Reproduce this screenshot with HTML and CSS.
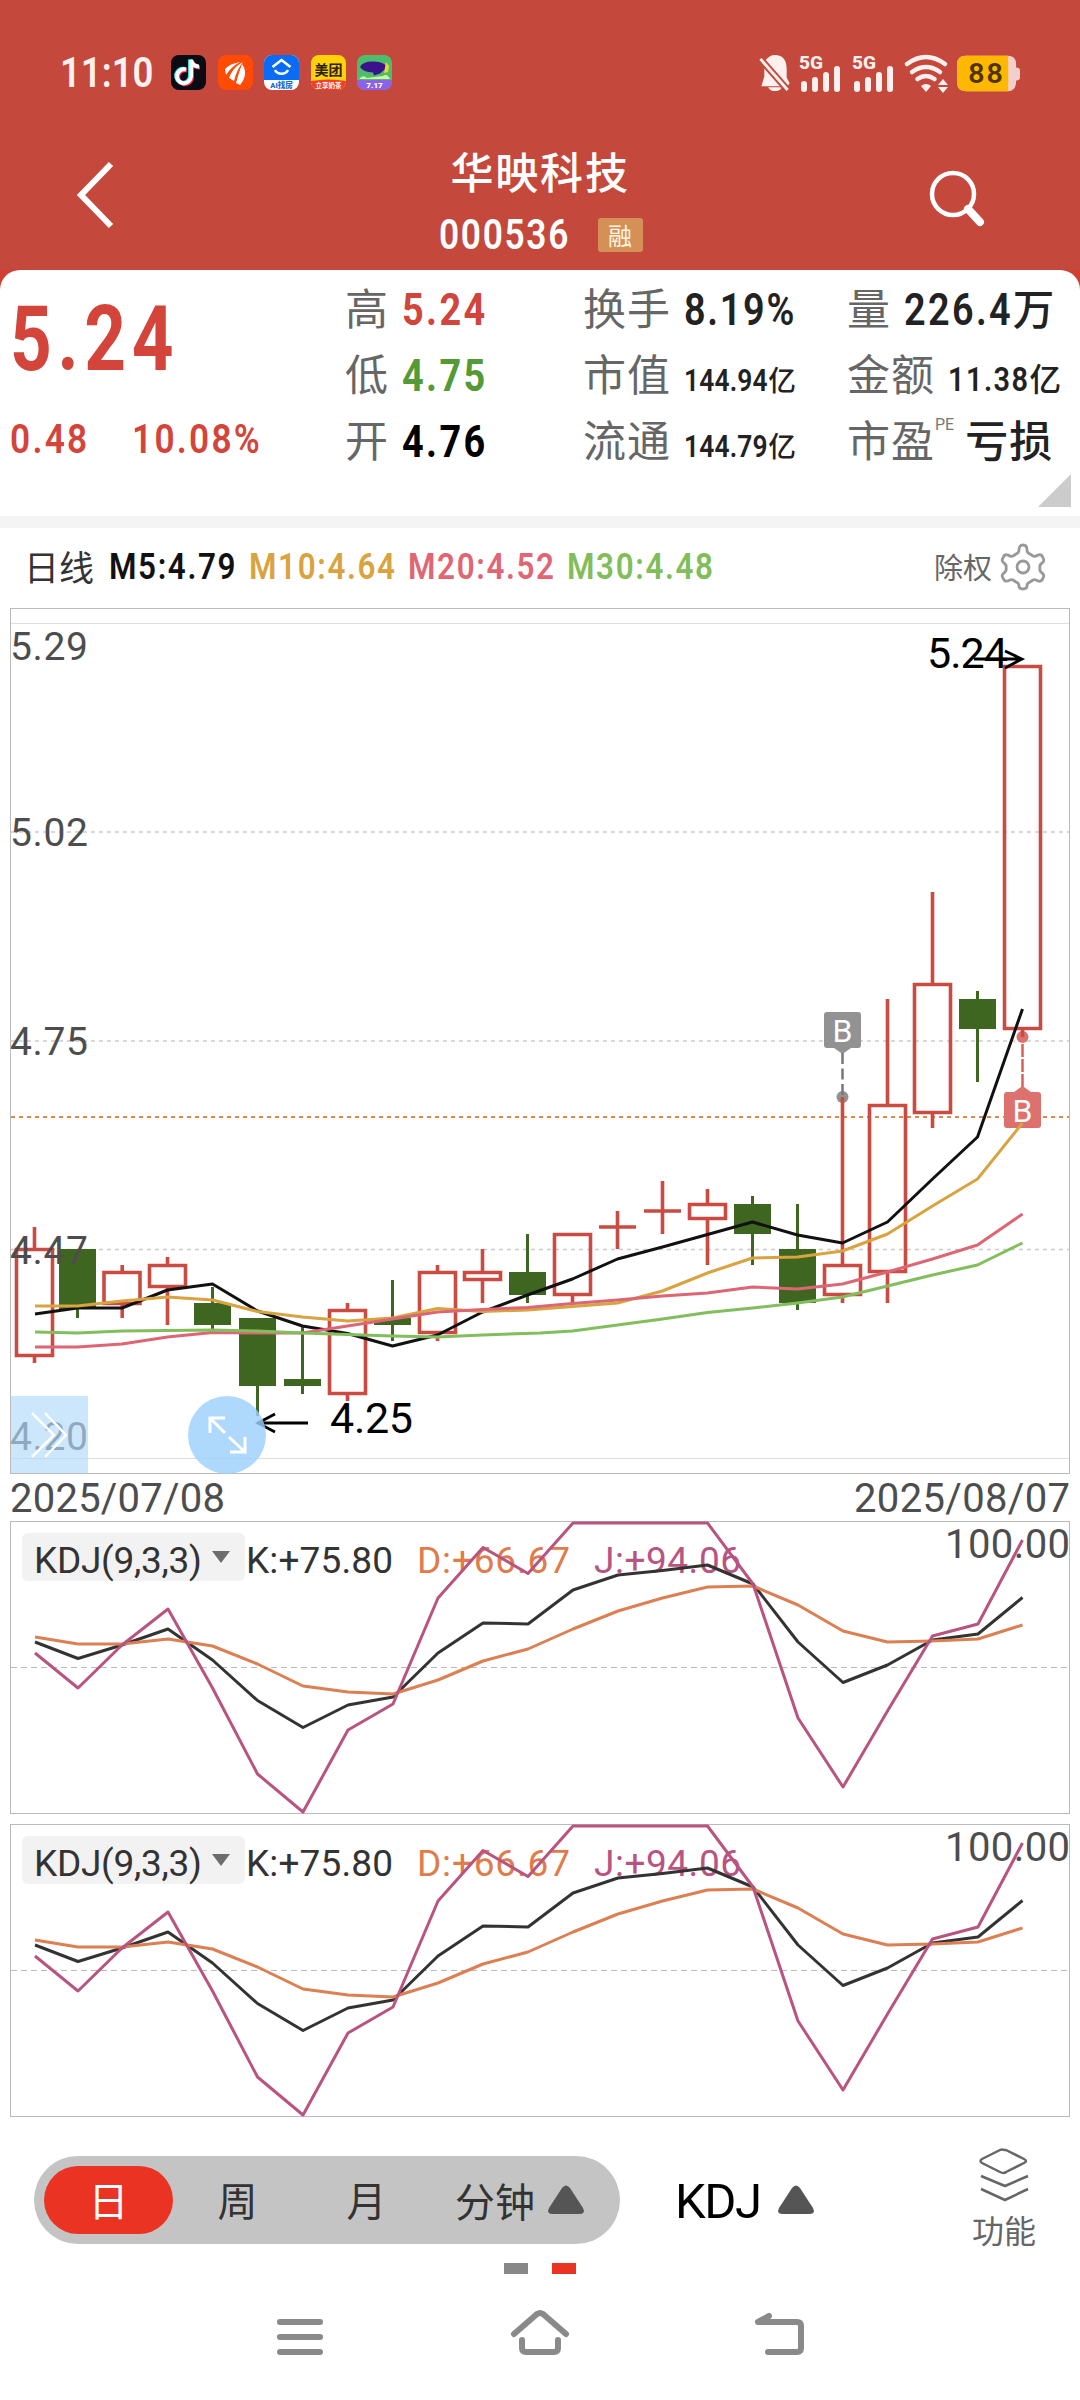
FILE: index.html
```html
<!DOCTYPE html>
<html lang="zh-CN">
<head>
<meta charset="utf-8">
<title>华映科技 000536</title>
<link rel="stylesheet" href="styles.css">
</head>
<body>
<header class="top">
  <div class="status">
    <span class="clock">11:10</span>
    <div class="apps">
      <svg viewBox="0 0 35 35"><rect width="35" height="35" rx="8" fill="#0b0b14"/><g fill="none" stroke-width="4"><path d="M15 14.500a7 7 0 1 0 5 7V5c1 4 4 6.500 8 6.500" stroke="#25e8e2" transform="translate(-1 -.5)"/><path d="M15 14.500a7 7 0 1 0 5 7V5c1 4 4 6.500 8 6.500" stroke="#fe2c55" transform="translate(1 1)"/><path d="M15 14.500a7 7 0 1 0 5 7V5c1 4 4 6.500 8 6.500" stroke="#fff"/></g></svg>
      <svg viewBox="0 0 35 35"><rect width="35" height="35" rx="8" fill="#ff4b05"/><path d="M7 14q4-5 15-7Q13 12 8 20ZM11 23Q15 12 25 7Q19 14 16 26ZM18 28Q21 17 24 9Q31 19 22 30Z" fill="#fff"/></svg>
      <svg viewBox="0 0 35 35"><rect width="35" height="35" rx="8" fill="#fff"/><path d="M8 0h19a8 8 0 0 1 8 8v17H0V8a8 8 0 0 1 8-8z" fill="#0a6cf5"/><path d="M8.500 12l9-7 9 7M11 15a7 6 0 0 0 13 0" fill="none" stroke="#fff" stroke-width="2.500"/><text x="17.500" y="33" font-size="7.500" font-weight="900" text-anchor="middle" fill="#1769d2">AI找房</text></svg>
      <svg viewBox="0 0 35 35"><rect width="35" height="35" rx="8" fill="#ffd20a"/><path d="M0 26q18-3 35 0v1a8 8 0 0 1-8 8H8a8 8 0 0 1-8-8z" fill="#f0402c"/><text x="17.500" y="19.500" font-size="14" font-weight="700" text-anchor="middle" fill="#2b2200">美团</text><text x="17.500" y="33" font-size="6.500" font-weight="700" text-anchor="middle" fill="#fff">立享奶茶</text></svg>
      <svg viewBox="0 0 35 35"><rect width="35" height="35" rx="8" fill="#4dbd6b"/><path d="M0 25h35v2a8 8 0 0 1-8 8H8a8 8 0 0 1-8-8z" fill="#8a63e8"/><path d="M3 12q3-6 14-5.500t13 6l-7 6-6 2-1-3Q6 17 3 12z" fill="#3c128c"/><path d="M29 7l3 4-1 6-4 1z" fill="#ecd52f"/><path d="M2 24q4-5 8-1l8-1 8-1q4-3 7 3z" fill="#d7efab"/><text x="17.500" y="33" font-size="8" font-weight="900" text-anchor="middle" fill="#fff">7.17</text></svg>
    </div>
    <div class="signals">
      <svg class="bell" viewBox="0 0 32 38" fill="#fdf0ee"><path d="M6 6Q10 0 16 0q12 0 12 15v8l3 6-2 3H2l3-10V14z"/><path d="M9 33h14q-2 4-7 4t-7-4z"/><path d="M1 4l28 32" stroke="#c4483c" stroke-width="7"/><path d="M1 4l28 32" stroke="#fdf0ee" stroke-width="3"/></svg>
      <svg class="cell" viewBox="0 0 46 38" fill="#fdf0ee"><text x="1" y="14" font-size="18" font-weight="800" textLength="24" lengthAdjust="spacingAndGlyphs">5G</text><rect x="3" y="26" width="6" height="11" rx="3"/><rect x="14" y="22" width="6" height="15" rx="3"/><rect x="25" y="17" width="6" height="20" rx="3"/><rect x="36" y="11" width="6" height="26" rx="3"/></svg>
      <svg class="cell" viewBox="0 0 46 38" fill="#fdf0ee"><text x="1" y="14" font-size="18" font-weight="800" textLength="24" lengthAdjust="spacingAndGlyphs">5G</text><rect x="3" y="26" width="6" height="11" rx="3"/><rect x="14" y="22" width="6" height="15" rx="3"/><rect x="25" y="17" width="6" height="20" rx="3"/><rect x="36" y="11" width="6" height="26" rx="3"/></svg>
      <svg class="wifi" viewBox="0 0 46 38"><g fill="none" stroke="#fdf0ee" stroke-width="4.500" stroke-linecap="round"><path d="M3 9q19-14 38 0M8 17q14-10 28 0M13.500 24q8.500-6 17 0"/></g><path d="M17 31q5-4 10 0l-5 6zM34 30l5-6 5 6zM34 32l5 6 5-6z" fill="#fdf0ee"/></svg>
      <svg class="battery" viewBox="0 0 64 36"><path d="M9 0h43q7 0 8 7v5q4 0 4 3v7q0 3-4 3v3q-1 8-8 8H9q-9 0-9-9V9q0-9 9-9z" fill="#f2cfcb"/><path d="M9 0h43v36H9q-9 0-9-9V9q0-9 9-9z" fill="#ffb800"/><text x="29" y="28" font-size="29" font-weight="600" text-anchor="middle" textLength="35" fill="#4f3300">88</text></svg>
    </div>
  </div>
  <div class="titlebar">
    <svg class="back" viewBox="0 0 44 72" fill="none" stroke="#fff" stroke-width="6"><path d="M38 5L8 36l30 31"/></svg>
    <div class="name">
      <h1>华映科技</h1>
      <div class="codeline"><span class="code">000536</span><span class="badge">融</span></div>
    </div>
    <svg class="search" viewBox="0 0 60 60" fill="none" stroke="#fff"><circle cx="25" cy="25" r="21" stroke-width="4.500"/><path d="M40 40l12 13" stroke-width="8" stroke-linecap="round"/></svg>
  </div>
</header>

<section class="cardwrap">
  <div class="quote">
    <div class="price">
      <div class="last">5.24</div>
      <div class="change"><span class="diff">0.48</span><span class="pct">10.08%</span></div>
    </div>
    <div class="col c1">
      <div class="item"><label>高</label><b class="num red">5.24</b></div>
      <div class="item"><label>低</label><b class="num green">4.75</b></div>
      <div class="item"><label>开</label><b class="num black">4.76</b></div>
    </div>
    <div class="col c2">
      <div class="item"><label>换手</label><b class="num turn">8.19%</b></div>
      <div class="item"><label>市值</label><b class="num small">144.94<i>亿</i></b></div>
      <div class="item"><label>流通</label><b class="num small">144.79<i>亿</i></b></div>
    </div>
    <div class="col c3">
      <div class="item"><label>量</label><b class="num vol">226.4<i>万</i></b></div>
      <div class="item"><label>金额</label><b class="num amt">11.38<i>亿</i></b></div>
      <div class="item"><label>市盈</label><sup>PE</sup><b class="cjk">亏损</b></div>
    </div>
    <span class="corner"></span>
  </div>
</section>

<section class="legend">
  <span class="period">日线</span>
  <span class="ma ma5">M5:4.79</span>
  <span class="ma ma10">M10:4.64</span>
  <span class="ma ma20">M20:4.52</span>
  <span class="ma ma30">M30:4.48</span>
  <span class="adjust">除权</span>
  <svg class="gear" viewBox="0 0 46 46" fill="none" stroke="#999" stroke-width="2.800" stroke-linejoin="round"><path d="M19 7q0-5 4-5t4 5q0 3 3 4l3 2q2 1 5-1 4-1 5 3 2 3-1 5-3 2-2 5-1 3 2 5 3 2 1 5-1 4-5 3-3-2-5-1l-3 2q-3 1-3 4 0 3-4 3t-4-3q0-3-3-4l-3-2q-2-1-5 1-4 1-5-3-2-3 1-5 3-2 2-5 1-3-2-5-3-2-1-5 1-4 5-3 3 2 5 1l3-2q3-1 3-4z"/><circle cx="23" cy="24" r="6"/></svg>
</section>

<svg class="chart" viewBox="0 595 1080 920">
  <g fill="none" stroke-width="1">
    <rect x="10.500" y="608.500" width="1059" height="865" stroke="#bbb"/>
    <path d="M11 623.500H1069M11 1458.500H1069" stroke="#ddd"/>
    <path d="M11 832H1069M11 1041H1069M11 1249.500H1069" stroke="#ccc" stroke-width="1.500" stroke-dasharray="4 4"/>
  </g>
  <path d="M11 1117H1069" stroke="#dc8a4c" stroke-width="2" stroke-dasharray="4 4"/>
  <g class="axis">
    <text x="10" y="660" textLength="78">5.29</text>
    <text x="10" y="846" textLength="78">5.02</text>
    <text x="10" y="1055" textLength="78">4.75</text>
    <text x="10" y="1450" textLength="78">4.20</text>
  </g>
  <g fill="#929292"><rect x="824" y="1012" width="37" height="36" rx="3"/><path d="M834 1048h17l-8.500 6z"/><circle cx="842.500" cy="1097" r="6"/><path d="M842.500 1053V1095" stroke="#777" stroke-width="2.500" stroke-dasharray="11 4.500"/></g>
  <g fill="#dc716d"><rect x="1004" y="1092" width="37" height="36" rx="3"/><path d="M1014 1092h17l-8.500-6z"/><circle cx="1022.500" cy="1037" r="6"/><path d="M1022.500 1044V1088" stroke="#d9605a" stroke-width="2.500" stroke-dasharray="13 2"/></g>
  <text class="mark" x="842.500" y="1042">B</text><text class="mark" x="1022.500" y="1122">B</text>
  <path class="up" d="M16.500 1249.500h36v106h-36zM34.500 1227v22M34.500 1355v8M104 1272.500h36v31h-36zM122.200 1265v7M122.200 1303v15M149.500 1265.500h36v21h-36zM167.500 1257v8M167.500 1287v38M329.500 1310.500h36v83h-36zM347.500 1303v7M347.500 1394v7M419.500 1272.500h36v60h-36zM437.500 1265v7M437.500 1333v8M464.500 1272.500h36v7h-36zM482.500 1249v23M482.500 1280v23M554.500 1234.500h36v60h-36zM572.500 1295v8M599 1227h37M617.500 1211v38M644 1211h37M662.500 1181v53M689.500 1204.500h36v14h-36zM707.500 1189v15M707.500 1219v46M824.500 1265.500h36v29h-36zM842.500 1097v168M842.500 1295v8M869.500 1105.500h36v166h-36zM887.500 999v106M887.500 1272v31M914.500 984.500h36v128h-36zM932.500 892v92M932.500 1113v15M1004.500 666.500h36v362h-36zM1022.500 1029v8"/>
  <g fill="#3e6621">
    <path d="M59 1249h37v60H59zM194 1303h37v22h-37zM239 1318h37v68h-37zM284 1379h37v7h-37zM374 1318h37v7h-37zM509 1272h37v23h-37zM734 1204h37v30h-37zM779 1249h37v54h-37zM959 999h37v30h-37z"/>
    <path d="M77.500 1300v18M212.500 1287v46M257.500 1380v36M302.500 1326v68M392.500 1280v61M527.500 1234v69M752.500 1196v69M797.500 1204v106M977.500 991v91" stroke="#3e6621" stroke-width="3"/>
  </g>
  <text class="axis" x="10" y="1263.500" textLength="78">4.47</text>
  <g class="lines">
    <polyline stroke="#111" points="35,1314 77.500,1308 122,1308 167.500,1290 212.500,1284 257.500,1311 302.500,1326 347.500,1333.500 392.500,1346 437.500,1335 482.500,1312 527.500,1295 572.500,1279 617.500,1259 662.500,1247 707.500,1234.500 752.500,1222 797.500,1235 842.500,1243 887.500,1222 932.500,1179 977.500,1137 1022.500,1009"/>
    <polyline stroke="#d9a340" points="35,1306 77.500,1306 122,1301 167.500,1297 212.500,1300 257.500,1311.500 302.500,1317 347.500,1321 392.500,1318 437.500,1308.500 482.500,1311.500 527.500,1310 572.500,1306.500 617.500,1303 662.500,1291 707.500,1273 752.500,1258 797.500,1257 842.500,1251 887.500,1234 932.500,1206 977.500,1179 1022.500,1123"/>
    <polyline stroke="#dc6674" points="35,1347 77.500,1347 122,1344 167.500,1337 212.500,1332.500 257.500,1333 302.500,1333 347.500,1326 392.500,1319 437.500,1312 482.500,1309.500 527.500,1307.500 572.500,1303.500 617.500,1300 662.500,1296 707.500,1293 752.500,1287 797.500,1289 842.500,1284 887.500,1272 932.500,1259 977.500,1245 1022.500,1214"/>
    <polyline stroke="#82bd5e" points="35,1332 77.500,1333 122,1331 212.500,1330 257.500,1331 302.500,1333 392.500,1336 437.500,1337 482.500,1335 540,1333 572.500,1331 617.500,1325 662.500,1319 707.500,1312.500 752.500,1308 797.500,1303 842.500,1297 887.500,1286 932.500,1275 977.500,1265 1022.500,1243"/>
  </g>
  <rect x="11" y="1396" width="77" height="77" fill="#b1dafb" opacity=".66"/>
  <path d="M257 1423H308M275 1414l-17 9 17 9" class="arrow"/>
  <circle cx="227" cy="1435" r="39" fill="#9dd0fc" opacity=".82"/>
  <g fill="none" stroke="#fff" stroke-width="3"><path d="M32 1413l22 22-22 22M45 1413l21 22-21 22" stroke-width="2.500"/><path d="M225 1418h-15v15M210 1418l15 15M245 1437v15h-15M245 1452l-16-15"/></g>
  <path d="M974 659H1022M1005 651l17 8-17 9" class="arrow"/>
  <text class="peak" x="927" y="667.500" textLength="81">5.24</text>
  <text class="peak" x="330" y="1433" textLength="83">4.25</text>
  <text class="axis date" x="10" y="1511.500" textLength="215">2025/07/08</text>
  <text class="axis date" x="854" y="1511.500" textLength="216">2025/08/07</text>
</svg>

<svg class="kdj" viewBox="0 1515 1080 303">
  <g id="kdj">
    <rect x="10.500" y="1521.500" width="1059" height="292" fill="none" stroke="#bbb"/>
    <path d="M11 1667.500H1069" stroke="#bbb" stroke-dasharray="6 4"/>
    <text class="val" x="246" y="1572.500" textLength="147" fill="#333">K:+75.80</text>
    <text class="val" x="417" y="1572.500" textLength="153" fill="#e07b4c">D:+66.67</text>
    <text class="val" x="594" y="1572.500" textLength="147" fill="#b8547f">J:+94.06</text>
    <text class="axis date" x="945" y="1558" textLength="125">100.00</text>
    <g class="lines">
      <polyline stroke="#333" points="35,1642 78,1658.500 122,1645 168,1629 212.500,1660 257.500,1700.500 303,1727.500 348,1705 393,1697 438,1653 483,1623 528,1624 573,1590 618,1575 662.500,1570.500 707.500,1565 753,1584 798,1642 843,1682.500 887.500,1665 932.500,1640 978,1634 1022.500,1597.500"/>
      <polyline stroke="#dc7f52" points="35,1637 78,1644 122,1644 168,1639 212.500,1646 257.500,1664 303,1686 348,1692 393,1694 438,1680 483,1661 528,1649 573,1629 618,1611 662.500,1598 707.500,1587 753,1586 798,1605 843,1631 887.500,1642 932.500,1641 978,1639 1022.500,1625"/>
      <polyline stroke="#b8547f" points="35,1653 78,1688 122,1645 168,1609 212.500,1688 257.500,1774 303,1812 348,1730 393,1704 438,1598 483,1547.500 528,1573.500 573,1523 707.500,1523 753,1584 798,1718 843,1787 887.500,1711 932.500,1636 978,1624 1022.500,1540"/>
    </g>
    <rect x="22" y="1533" width="223" height="48" rx="6" fill="#f2f2f2"/>
    <text class="val" x="34" y="1572.500" textLength="168" fill="#333">KDJ(9,3,3)</text>
    <path d="M212 1551h18l-9 12z" fill="#6d6d6d"/>
  </g>
</svg>
<svg class="kdj" viewBox="0 1515 1080 303"><use href="#kdj"/></svg>

<footer class="tools">
  <div class="pill">
    <span class="tab on">日</span><span class="tab">周</span><span class="tab">月</span>
    <span class="minutes">分钟<svg class="tri" viewBox="0 0 38 30"><path d="M15 3q4-5 8 0l13 20q3 6-4 6H6q-7 0-4-6z" fill="#555"/></svg></span>
  </div>
  <div class="indicator"><span>KDJ</span><svg class="tri" viewBox="0 0 38 30"><path d="M15 3q4-5 8 0l13 20q3 6-4 6H6q-7 0-4-6z" fill="#555"/></svg></div>
  <div class="func">
    <svg viewBox="0 0 50 54" fill="none" stroke="#666" stroke-width="2.500" stroke-linejoin="round"><path d="M25 2q-2-1-4 0L3 11q-3 2 0 4l18 9q4 2 6 0l18-9q4-2 0-4L27 2zM2 28l24 10 23-10M2 41l24 11 23-11"/></svg>
    <span>功能</span>
  </div>
</footer>
<div class="pages"><i></i><i class="on"></i></div>
<nav class="sysnav">
  <svg viewBox="0 0 60 60"><path d="M10 15h40M10 30h40M10 45h40"/></svg>
  <svg viewBox="0 0 60 60"><path d="M4 27L27 7q3-2 6 0l23 20M12 33v8q0 4 4 4h28q4 0 4-4v-8"/></svg>
  <svg viewBox="0 0 60 60"><path d="M19 9L8 15h39q4 0 4 4v22q0 4-4 4H18"/></svg>
</nav>
</body>
</html>
```
FILE: styles.css
```css
* { box-sizing: border-box; }
body { margin: 0; width: 1080px; height: 2400px; overflow: hidden; background: #fff; color: #333; font-family: Roboto, "Noto Sans CJK SC", sans-serif; }
svg { display: block; flex: none; overflow: visible; }
h1, b, i, label { margin: 0; font-style: normal; font-weight: inherit; }

.top { height: 270px; background: #c4483c; color: #fff; }
.status { height: 145px; padding: 55px 60px 0 60px; display: flex; align-items: flex-start; }
.clock { width: 111px; font: 600 42px/36px Roboto, sans-serif; letter-spacing: 0; color: #fdf0ee; white-space: nowrap; transform: scaleX(.87); transform-origin: 0 0; }
.apps { display: flex; gap: 11.500px; flex: 1; }
.apps svg { width: 35px; height: 35px; }
.signals { display: flex; align-items: flex-start; }
.bell { width: 32px; height: 37px; margin-right: 7px; }
.cell { width: 46px; height: 38px; margin-right: 7px; }
.wifi { width: 46px; height: 38px; margin-right: 7px; }
.battery { width: 63px; height: 37px; }
.titlebar { height: 125px; display: flex; justify-content: space-between; padding: 0 92px 0 73px; }
.back { width: 44px; height: 72px; margin-top: 14px; }
.name { width: 216px; margin-left: 48px; }
h1 { width: 182px; font: 500 43px/52px "Noto Sans CJK SC", sans-serif; letter-spacing: 1.800px; white-space: nowrap; margin: -1px 0 0 12px; }
.codeline { display: flex; align-items: center; height: 72px; margin-top: 3px; }
.code { width: 159px; font: 600 42px/44px Roboto, sans-serif; letter-spacing: 2px; transform: scaleX(.84); transform-origin: 0 0; }
.badge { width: 45px; height: 34px; border-radius: 3px; background: #d49056; color: #fff6e4; font: 24px/33px "Noto Sans CJK SC", sans-serif; text-align: center; }
.search { width: 60px; height: 60px; margin: 24px 0 0 0; }

.cardwrap { background: #cf4033; }
.quote { height: 246px; background: #fff; border-radius: 20px 20px 0 0; display: flex; position: relative; }
.price { width: 346px; padding-left: 10px; color: #d3453b; }
.last { font-size: 90px; line-height: 90px; font-weight: 700; letter-spacing: 7px; margin-top: 25px; transform: scaleX(.81); transform-origin: 0 0; }
.change { display: flex; margin-top: 32px; font-size: 41px; line-height: 44px; letter-spacing: 2.600px; font-weight: 600; }
.diff { width: 122px; }
.diff, .pct { transform: scaleX(.86); transform-origin: 0 0; }
.col { padding-top: 3px; display: flex; flex-direction: column; }
.c1 { width: 238px; margin-left: -1px; } .c2 { width: 264px; } .c3 { width: 231px; }
.item { height: 66px; display: flex; align-items: baseline; white-space: nowrap; }
.item label { font: 43px/66px "Noto Sans CJK SC", sans-serif; letter-spacing: 1px; color: #666; }
.num { margin-left: 13px; font: 700 44.500px/66px Roboto, sans-serif; letter-spacing: 2.800px; color: #222; transform: scaleX(.85); transform-origin: 0 0; }
.num i { display: inline-block; font-family: "Noto Sans CJK SC", sans-serif; font-weight: 500; letter-spacing: 0; line-height: 1; transform: scaleX(1.163); transform-origin: 0 0; }
.num.red { color: #d0453c; } .num.green { color: #549a37; } .num.black { color: #000; }
.turn { letter-spacing: 2px; font-weight: 600; }
.small { font-size: 31px; letter-spacing: .2px; font-weight: 600; } .small i { font-size: 28px; }
.amt { font-size: 34px; letter-spacing: 1.700px; font-weight: 600; } .amt i { font-size: 32px; }
.vol { font-weight: 600; } .vol i { font-size: 42px; }
.cjk { margin-left: 11px; font: 500 43px/66px "Noto Sans CJK SC", sans-serif; letter-spacing: 1px; color: #222; }
sup { font: 16px/16px Roboto, sans-serif; color: #777; align-self: flex-start; margin-top: 12px; }
.corner { position: absolute; right: 9px; bottom: 9px; border-left: 33px solid transparent; border-bottom: 33px solid #ccc; }

.legend { height: 79px; border-top: 12px solid #f4f4f4; padding: 9px 34px 0 24px; display: flex; align-items: center; white-space: nowrap; }
.period { width: 85px; font: 35px/50px "Noto Sans CJK SC", sans-serif; }
.ma { font: 600 36.500px/50px Roboto, sans-serif; letter-spacing: 1.900px; padding-top: 2px; transform: scaleX(.86); transform-origin: 0 0; }
.ma5 { width: 140px; color: #111; } .ma10 { width: 159px; color: #d9a340; } .ma20 { width: 159px; color: #e06674; } .ma30 { color: #82bd5a; flex: 1; }
.adjust { font: 29px/50px "Noto Sans CJK SC", sans-serif; color: #666; margin-right: 8px; }
.gear { width: 46px; height: 46px; }

.chart { width: 1080px; height: 920px; }
.kdj { width: 1080px; height: 303px; }
.axis { font-size: 39px; fill: #4d4d4d; }
.date { font-size: 40px; }
.peak { font-size: 43px; fill: #000; }
.val { font-size: 37px; }
.mark { font-size: 32px; fill: #fff; text-anchor: middle; }
.up { fill: none; stroke: #c94b42; stroke-width: 3.600; }
.lines { fill: none; stroke-width: 3; stroke-linejoin: round; }
.arrow { fill: none; stroke: #000; stroke-width: 2.800; }

.tools { height: 123px; margin-top: 15px; padding: 0 33px 0 34px; display: flex; align-items: flex-start; font-family: "Noto Sans CJK SC", sans-serif; }
.pill { width: 586px; height: 88px; margin-top: 20px; padding: 10px; border-radius: 44px; background: #c4c4c4; display: flex; align-items: center; font-size: 40px; }
.tab { width: 129px; height: 68px; line-height: 66px; text-align: center; border-radius: 34px; }
.tab.on { background: #eb3323; color: #fff; }
.minutes { margin-left: 24px; line-height: 66px; display: flex; align-items: center; gap: 12px; }
.tri { width: 38px; height: 30px; }
.indicator { margin: 20px 0 0 55px; height: 88px; display: flex; align-items: center; gap: 17px; font: 400 49px/88px Roboto, sans-serif; letter-spacing: -1.500px; color: #000; }
.indicator span { padding-top: 4px; }
.func { flex: 1; display: flex; flex-direction: column; align-items: flex-end; padding: 12px 11px 0 0; color: #666; font-size: 32px; line-height: 54px; }
.func svg { width: 50px; height: 54px; margin-right: 7px; }
.pages { height: 12px; margin-top: 4px; display: flex; justify-content: center; gap: 24px; }
.pages i { width: 24px; height: 11px; background: #888; }
.pages .on { background: #eb3323; }
.sysnav { display: flex; justify-content: center; gap: 180px; margin-top: 32px; }
.sysnav svg { width: 60px; height: 60px; fill: none; stroke: #8a8a8a; stroke-width: 6; stroke-linecap: round; stroke-linejoin: round; }
```
